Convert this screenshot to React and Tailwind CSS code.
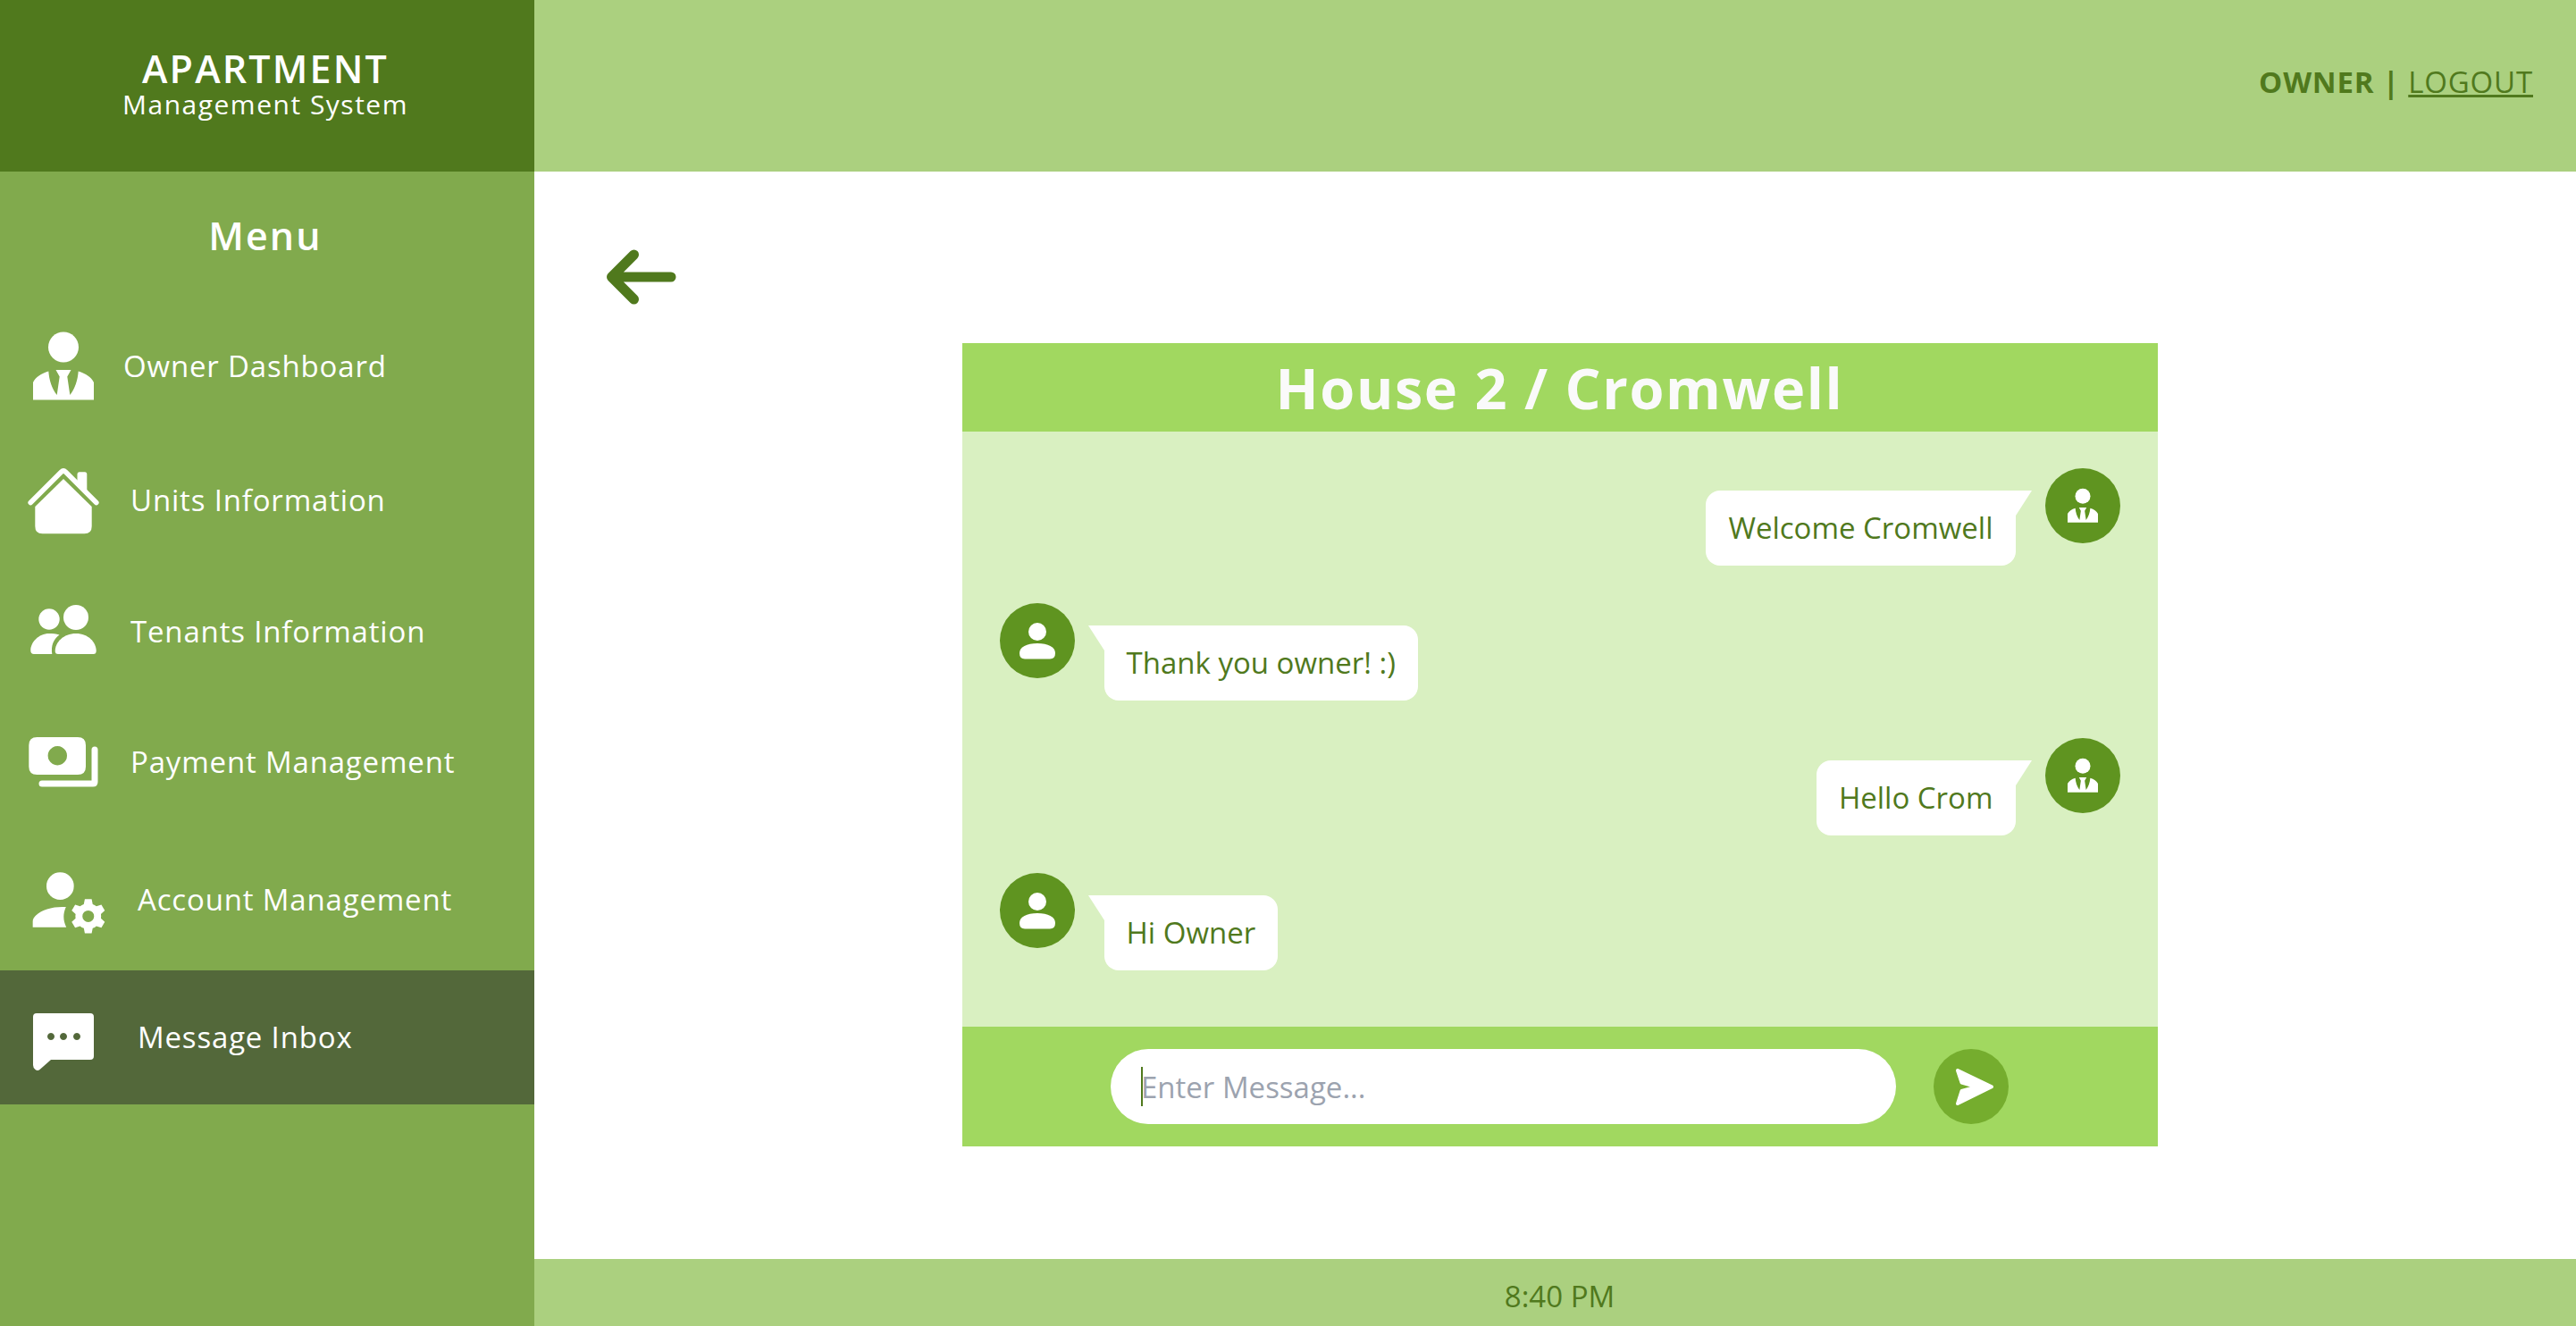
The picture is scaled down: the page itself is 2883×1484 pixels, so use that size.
const TieIcon = ({ className }) => (
  <svg viewBox="0 0 84 84" fill="currentColor" aria-hidden="true" className={className}>
    <circle cx="42" cy="20.5" r="17" />
    <path d="M8 79.5V60C11 54 17 50 25.3 47.5C26 57 29 67 34.7 74L37.7 53.5L33.5 46H50.5L46.3 53.5L49.3 74C55 67 58 57 58.7 47.5C67 50 73 54 76 60V79.5Z" />
  </svg>
);

const HomeIcon = ({ className }) => (
  <svg viewBox="0 0 84 84" fill="currentColor" aria-hidden="true" className={className}>
    <path d="M5.2 44.5L39.5 10.2Q42 7.8 44.5 10.2L78.8 44.5" fill="none" stroke="currentColor" strokeWidth="5.6" strokeLinecap="round" strokeLinejoin="round" />
    <path d="M57.5 22V13Q57.5 10.3 60 10.3H66Q68.3 10.3 68.3 13V33Z" />
    <path d="M42 18L73.7 49V71Q73.7 79.3 65.5 79.3H18.5Q10.3 79.3 10.3 71V49Z" />
  </svg>
);

const TenantsIcon = ({ className }) => (
  <svg viewBox="0 0 84 84" fill="currentColor" aria-hidden="true" className={className}>
    <circle cx="26" cy="28" r="11.7" />
    <circle cx="56" cy="26" r="14" />
    <path d="M56 44C42 44 32.7 54 32.7 63.5Q32.7 67 36 67H75.5Q78.7 67 78.7 63.5C78.7 54 70 44 56 44Z" />
    <path d="M37.5 45.5C34 44.3 30 44 26 44C14 44 5.3 54 5.3 63Q5.3 67 9 67H29.3C28 58 30.5 50.5 37.5 45.5Z" />
  </svg>
);

const PaymentIcon = ({ className }) => (
  <svg viewBox="0 0 84 84" fill="currentColor" aria-hidden="true" className={className}>
    <path fillRule="evenodd" d="M12.5 14H58Q67 14 67 23V47Q67 56 58 56H12.5Q3.3 56 3.3 47V23Q3.3 14 12.5 14ZM35.3 24a10.7 10.7 0 1 0 0.01 0Z" />
    <path d="M77 28V64Q77 66 75 66H18" fill="none" stroke="currentColor" strokeWidth="7" strokeLinecap="round" />
  </svg>
);

const AccountIcon = ({ className }) => (
  <svg viewBox="0 0 24 24" fill="currentColor" aria-hidden="true" className={className}>
    <circle cx="10" cy="8" r="4" />
    <path d="M11.7 14.1C10 14 8 14.1 6 14.8C3.5 15.7 2 17 2 18.3V20H11.8C10.8 18 10.8 16 11.7 14.1Z" />
    <path
      transform="translate(1.2 0.8)"
      d="M20.75 16c0-.22-.03-.42-.06-.63l1.14-1.01-1-1.73-1.45.49c-.32-.27-.68-.48-1.08-.63L18 11h-2l-.3 1.49c-.4.15-.76.36-1.08.63l-1.45-.49-1 1.73 1.14 1.01c-.03.21-.06.41-.06.63s.03.42.06.63l-1.14 1.01 1 1.73 1.45-.49c.32.27.68.48 1.08.63L16 21h2l.3-1.49c.4-.15.76-.36 1.08-.63l1.45.49 1-1.73-1.14-1.01c.03-.21.06-.41.06-.63zM17 17.7a1.7 1.7 0 1 1 0-3.4 1.7 1.7 0 0 1 0 3.4z"
    />
  </svg>
);

const MessageIcon = ({ className }) => (
  <svg viewBox="0 0 84 84" fill="currentColor" aria-hidden="true" className={className}>
    <path fillRule="evenodd" d="M12 15H72Q76 15 76 19V63Q76 67 72 67H28L15.5 78Q13 80 10.5 78Q8 76 8 73V19Q8 15 12 15ZM28 37a4 4 0 1 0 .01 0ZM42 37a4 4 0 1 0 .01 0ZM57 37a4 4 0 1 0 .01 0Z" />
  </svg>
);

const PersonIcon = ({ className }) => (
  <svg viewBox="0 0 84 84" fill="currentColor" aria-hidden="true" className={className}>
    <circle cx="42" cy="32" r="10" />
    <path d="M42 45C54 45 62 49 62 56Q62 62.5 56 62.5H28Q22 62.5 22 56C22 49 30 45 42 45Z" />
  </svg>
);

const SendIcon = ({ className }) => (
  <svg viewBox="0 0 84 84" fill="currentColor" stroke="currentColor" strokeWidth="4" strokeLinejoin="round" aria-hidden="true" className={className}>
    <path d="M27 24L65 42.3L27 61L31.5 47L48 42.3L31.5 37.5Z" />
  </svg>
);

const BackIcon = ({ className }) => (
  <svg viewBox="0 0 84 84" fill="none" stroke="currentColor" strokeWidth="11" strokeLinecap="round" strokeLinejoin="round" aria-hidden="true" className={className}>
    <path d="M75 42H9M33.5 17L8.5 42L33.5 67" />
  </svg>
);

const menu = [
  { label: "Owner Dashboard", Icon: TieIcon, row: "h-[148px] gap-[25px]", icon: "size-[84px]" },
  { label: "Units Information", Icon: HomeIcon, row: "h-[152px] gap-[33px]", icon: "size-[84px]" },
  { label: "Tenants Information", Icon: TenantsIcon, row: "h-[142px] gap-[33px]", icon: "size-[84px]" },
  { label: "Payment Management", Icon: PaymentIcon, row: "h-[150px] gap-[33px]", icon: "size-[84px]" },
  { label: "Account Management", Icon: AccountIcon, row: "h-[158px] gap-[33px]", icon: "size-[92px]" },
  { label: "Message Inbox", Icon: MessageIcon, row: "h-[150px] gap-[41px]", icon: "size-[84px]", active: true },
];

const messages = [
  { mine: true, text: "Welcome Cromwell" },
  { mine: false, text: "Thank you owner! :)" },
  { mine: true, text: "Hello Crom" },
  { mine: false, text: "Hi Owner" },
];

function Message({ mine, text }) {
  return (
    <li className={mine ? "flex flex-row-reverse items-start gap-[33px]" : "flex items-start gap-[33px]"}>
      <span className="flex size-[84px] shrink-0 items-center justify-center rounded-full bg-[#5f9420] text-white">
        {mine ? <TieIcon className="size-[42px]" /> : <PersonIcon className="size-[84px]" />}
      </span>
      <p
        className={
          mine
            ? "relative mt-[25px] flex h-[84px] items-center rounded-2xl rounded-tr-none bg-white px-[25px]"
            : "relative mt-[25px] flex h-[84px] items-center rounded-2xl rounded-tl-none bg-white px-[25px]"
        }
      >
        {text}
        <svg
          viewBox="0 0 19 28"
          fill="white"
          aria-hidden="true"
          className={mine ? "absolute top-0 -right-[18px] h-7 w-[19px]" : "absolute top-0 -left-[18px] h-7 w-[19px]"}
        >
          <path d={mine ? "M0 0H19L1 28H0Z" : "M19 0H0L18 28H19Z"} />
        </svg>
      </p>
    </li>
  );
}

export default function App() {
  return (
    <div className="flex min-h-screen bg-white font-['Open_Sans','Noto_Sans',sans-serif] text-[33px] leading-[50px] text-[#50791d]">
      <aside className="flex w-[598px] shrink-0 flex-col bg-[#81aa4d] text-white">
        <div className="flex h-48 flex-col items-center bg-[#50791d] pt-[54px] pr-1">
          <h1 className="text-[43px] leading-[46px] font-semibold tracking-wider">APARTMENT</h1>
          <p className="text-[30px] leading-[34px] tracking-wider">Management System</p>
        </div>
        <h2 className="pt-[42px] pr-1 pb-[42px] text-center text-[43px] leading-[60px] font-semibold tracking-wider">Menu</h2>
        <nav className="tracking-wide">
          {menu.map(({ label, Icon, row, icon, active }) => (
            <a
              key={label}
              href="#"
              aria-current={active ? "page" : undefined}
              className={`flex items-center pl-[29px] ${row} ${active ? "bg-[#53683a]" : ""}`}
            >
              <Icon className={`shrink-0 ${icon}`} />
              {label}
            </a>
          ))}
        </nav>
      </aside>

      <div className="flex min-w-0 flex-1 flex-col">
        <header className="flex h-48 items-center justify-end bg-[#abd07f] pr-12 pb-2 tracking-wide">
          <p>
            <b>OWNER |</b>{" "}
            <a href="#" className="underline">LOGOUT</a>
          </p>
        </header>

        <main className="flex flex-1 flex-col pl-[10px]">
          <div className="flex pt-[76px] pl-[68px]">
            <button type="button" aria-label="Back" className="size-[84px]">
              <BackIcon className="size-full" />
            </button>
          </div>
          <section className="mx-auto mt-8 flex w-[1338px] max-w-full flex-col">
            <h2 className="bg-[#a1d860] pt-2 pb-[7px] text-center text-[63px] leading-[84px] font-bold tracking-wide text-[#fafafa]">
              House 2 / Cromwell
            </h2>
            <ul className="flex h-[666px] flex-col gap-[42px] bg-[#d9f0c1] px-[42px] pt-[41px]">
              {messages.map((m) => (
                <Message key={m.text} {...m} />
              ))}
            </ul>
            <form className="flex h-[134px] items-center justify-center gap-[42px] bg-[#a1d860]" onSubmit={(e) => e.preventDefault()}>
              <div className="relative w-[879px]">
                <input
                  type="text"
                  aria-label="Message"
                  placeholder="Enter Message..."
                  className="h-[84px] w-full rounded-full bg-white px-[34px] caret-transparent outline-none placeholder:text-[#9ca3af]"
                />
                <span className="absolute top-5 left-[34px] h-11 w-[2px] bg-[#50791d]" />
              </div>
              <button type="submit" aria-label="Send" className="size-[84px] rounded-full bg-[#75ad2e] text-white">
                <SendIcon className="size-full" />
              </button>
            </form>
          </section>
        </main>

        <footer className="flex h-[75px] items-center justify-center bg-[#abd07f] pt-2 pl-[10px]">8:40 PM</footer>
      </div>
    </div>
  );
}
